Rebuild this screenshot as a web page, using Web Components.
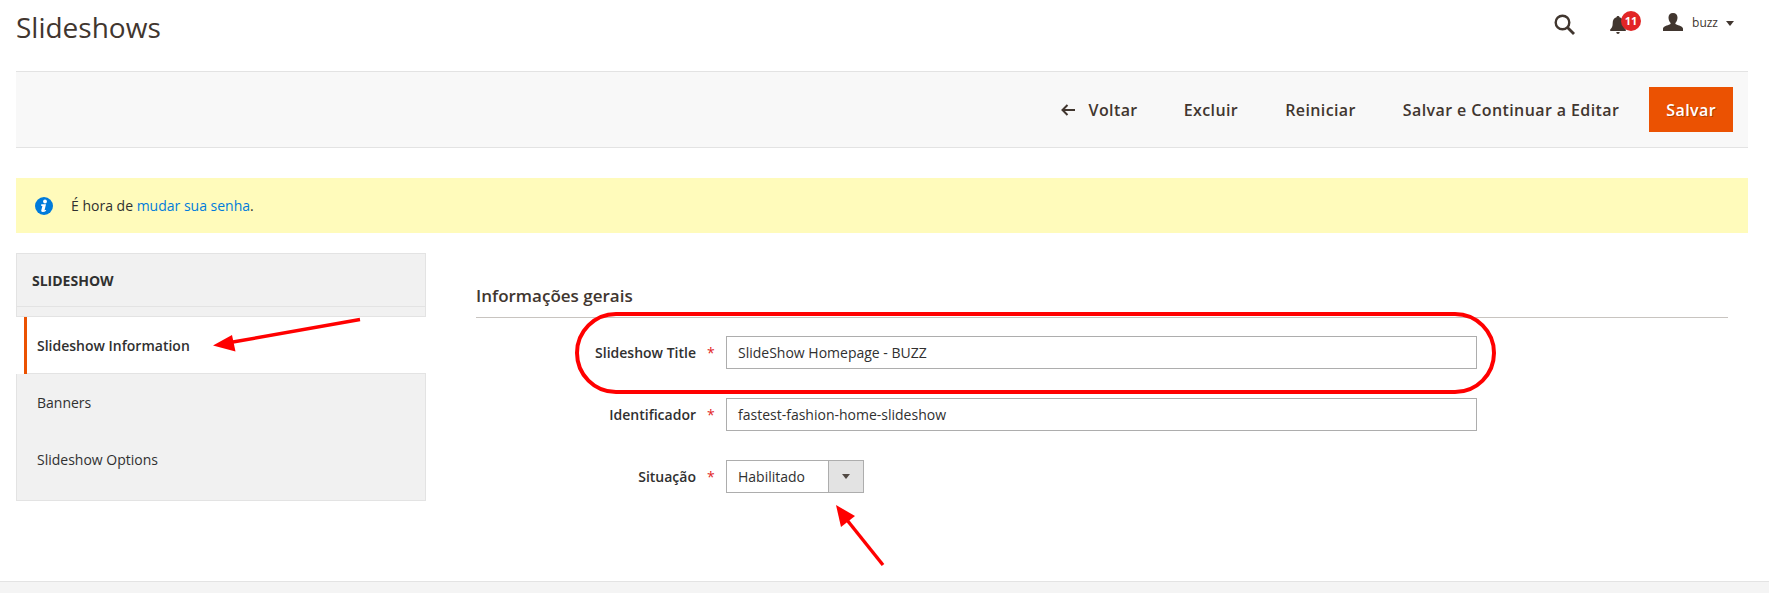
<!DOCTYPE html>
<html lang="pt-BR">
<head>
<meta charset="utf-8">
<title>Slideshows</title>
<style>
  html, body { margin: 0; padding: 0; background: #fff; }
  body { font-family: "Open Sans", "Liberation Sans", sans-serif; font-size: 14px; color: #303030; }
  .page { position: relative; height: 593px; overflow: hidden; display: flex; flex-direction: column; }
  .annotations { position: absolute; left: 0; top: 0; pointer-events: none; }
</style>
</head>
<body>
<div class="page">
  <admin-header title-text="Slideshows" user="buzz" count="11"></admin-header>
  <action-bar>
    <action-btn back>Voltar</action-btn>
    <action-btn>Excluir</action-btn>
    <action-btn>Reiniciar</action-btn>
    <action-btn>Salvar e Continuar a Editar</action-btn>
    <action-btn primary>Salvar</action-btn>
  </action-bar>
  <info-notice>É hora de <a href="#" style="color:#007bdb;text-decoration:none">mudar sua senha</a>.</info-notice>
  <edit-layout>
    <side-tabs slot="side" heading="SLIDESHOW">
      <tab-item active>Slideshow Information</tab-item>
      <tab-item>Banners</tab-item>
      <tab-item>Slideshow Options</tab-item>
    </side-tabs>
    <form-section heading="Informações gerais">
      <form-field label="Slideshow Title" value="SlideShow Homepage - BUZZ"></form-field>
      <form-field label="Identificador" value="fastest-fashion-home-slideshow"></form-field>
      <form-field label="Situação" value="Habilitado" select></form-field>
    </form-section>
  </edit-layout>
  <page-footer></page-footer>

  <!-- red marks drawn over the screenshot -->
  <svg class="annotations" width="1769" height="593" viewBox="0 0 1769 593" fill="none">
    <rect x="577" y="314" width="917" height="78" rx="39" ry="39" stroke="#ff0000" stroke-width="4"/>
    <path d="M360 319.5L230 342.5" stroke="#ff0000" stroke-width="3.4"/>
    <path d="M213 345.5L232 335L235.500 351.500Z" fill="#ff0000"/>
    <path d="M883 565L847 520" stroke="#ff0000" stroke-width="3.4"/>
    <path d="M836 505L855 516L841 527Z" fill="#ff0000"/>
  </svg>
</div>

<script>
class AdminHeader extends HTMLElement {
  connectedCallback() {
    const root = this.attachShadow({mode: 'open'});
    root.innerHTML = `
      <style>
        :host { display: flex; align-items: flex-start; justify-content: space-between; height: 71px; padding: 0 35px 0 16px; color: #41362f; }
        h1 { margin: 8px 0 0; font-size: 28px; line-height: 38px; font-weight: 400; color: #41362f; }
        .tools { display: flex; align-items: flex-start; }
        svg { display: block; }
        .search { margin-top: 14px; }
        .bell { position: relative; margin: 16px 0 0 35px; width: 18px; height: 20px; }
        .badge { position: absolute; left: 11px; top: -5px; width: 20px; height: 20px; border-radius: 50%; background: #e22626; color: #fff; font-size: 11px; font-weight: 700; line-height: 20px; text-align: center; }
        .user { margin: 13px 0 0 35px; }
        .name { margin: 13px 0 0 9px; font-size: 12px; line-height: 20px; }
        .caret { margin: 21px 0 0 8px; width: 0; height: 0; border: 4px solid transparent; border-top: 5px solid #41362f; border-bottom: 0; }
      </style>
      <h1>${this.getAttribute('title-text')}</h1>
      <div class="tools">
        <svg class="search" width="21" height="21" viewBox="0 0 21 21" fill="none" stroke="#41362f">
          <circle cx="8.500" cy="8.500" r="6.800" stroke-width="2.400"/>
          <path d="M13.500 13.500L20 20" stroke-width="2.800"/>
        </svg>
        <div class="bell">
          <svg width="16" height="18" viewBox="0 0 16 18" fill="#41362f">
            <path d="M8 0c1 0 1.500.6 1.500 1.300C12 2 13.300 4.200 13.300 7c0 3.600.8 5 2.500 6.500V15H.2v-1.500C1.900 12 2.700 10.600 2.700 7c0-2.800 1.300-5 3.800-5.700C6.500.6 7 0 8 0z"/>
            <path d="M6.300 16h3.400c0 1-.8 2-1.700 2s-1.700-1-1.700-2z"/>
          </svg>
          <div class="badge">${this.getAttribute('count')}</div>
        </div>
        <svg class="user" width="20" height="18" viewBox="0 0 20 18" fill="#41362f">
          <path d="M10 0c2.900 0 4.500 1.900 4.500 4.600 0 2-.8 4-1.900 5.200-.4.500-.3 1.200.3 1.500 2.900 1.300 6.600 2 7.100 4.100V18H0v-2.600c.5-2.100 4.200-2.800 7.100-4.100.6-.3.700-1 .3-1.500C6.300 8.600 5.500 6.600 5.500 4.600 5.500 1.900 7.100 0 10 0z"/>
        </svg>
        <div class="name">${this.getAttribute('user')}</div>
        <div class="caret"></div>
      </div>`;
  }
}

class ActionBar extends HTMLElement {
  constructor() {
    super();
    this.attachShadow({mode: 'open'}).innerHTML = `
      <style>
        :host { display: flex; align-items: center; justify-content: flex-end; gap: 13px; box-sizing: border-box; height: 77px; margin: 0 21px 0 16px; padding: 0 15px 0 0; background: #f8f8f8; border-top: 1px solid #e3e3e3; border-bottom: 1px solid #e3e3e3; }
      </style>
      <slot></slot>`;
  }
}

class ActionBtn extends HTMLElement {
  connectedCallback() {
    const back = this.hasAttribute('back');
    this.attachShadow({mode: 'open'}).innerHTML = `
      <style>
        :host { display: flex; align-items: center; height: 45px; padding: 0 17px; font-size: 16px; font-weight: 600; letter-spacing: .025em; color: #41362f; white-space: nowrap; }
        :host([back]) { margin-right: -1px; }
        :host([primary]) { background: #eb5202; color: #fff; text-shadow: 1px 1px 0 rgba(0,0,0,.25); }
        svg { margin-right: 14px; }
      </style>
      ${back ? `<svg width="14" height="12" viewBox="0 0 14 12" fill="none" stroke="#41362f" stroke-width="2"><path d="M14 6H2M6.500 1L1.500 6l5 5"/></svg>` : ''}
      <slot></slot>`;
  }
}

class InfoNotice extends HTMLElement {
  constructor() {
    super();
    this.attachShadow({mode: 'open'}).innerHTML = `
      <style>
        :host { display: flex; align-items: center; height: 55px; margin: 30px 21px 0 16px; padding-left: 19px; background: #fffbbb; font-size: 14px; color: #303030; }
        svg { margin-right: 18px; flex: none; }
      </style>
      <svg width="18" height="18" viewBox="0 0 18 18">
        <circle cx="9" cy="9" r="9" fill="#007bdb"/>
        <circle cx="10" cy="4.500" r="1.900" fill="#fff"/>
        <path d="M6.300 7.200h4.700l-1.400 5.700c-.1.300.1.500.4.400l.9-.4.300.8c-1.100.9-2.300 1.300-3.400 1.300-1.200 0-1.800-.6-1.500-1.700l1-3.800c.1-.4 0-.6-1.200-.8z" fill="#fff"/>
      </svg>
      <div><slot></slot></div>`;
  }
}

class EditLayout extends HTMLElement {
  constructor() {
    super();
    this.attachShadow({mode: 'open'}).innerHTML = `
      <style>
        :host { display: grid; grid-template-columns: 410px 1252px; column-gap: 50px; margin: 20px 0 0 16px; height: 328px; align-items: start; }
      </style>
      <slot name="side"></slot>
      <slot></slot>`;
  }
}

class SideTabs extends HTMLElement {
  connectedCallback() {
    this.attachShadow({mode: 'open'}).innerHTML = `
      <style>
        :host { display: block; box-sizing: border-box; height: 248px; border: 1px solid #e3e3e3; background: #f1f1f1; }
        .head { box-sizing: border-box; height: 53px; padding-left: 15px; line-height: 53px; font-size: 14px; font-weight: 700; color: #303030; border-bottom: 1px solid #e3e3e3; }
        .band { height: 9px; }
        .tabs { border-top: 1px solid #e3e3e3; }
      </style>
      <div class="head">${this.getAttribute('heading')}</div>
      <div class="band"></div>
      <div class="tabs"><slot></slot></div>`;
  }
}

class TabItem extends HTMLElement {
  constructor() {
    super();
    this.attachShadow({mode: 'open'}).innerHTML = `
      <style>
        :host { display: block; box-sizing: border-box; height: 57px; padding-left: 20px; line-height: 57px; font-size: 14px; color: #303030; }
        :host([active]) { margin: 0 -1px 0 -1px; padding-left: 13px; background-color: #fff; border-left: 8px solid #fff; font-weight: 600; box-shadow: inset 3px 0 0 #eb5202, inset 0 -1px 0 #e3e3e3; }
      </style>
      <slot></slot>`;
  }
}

class FormSection extends HTMLElement {
  connectedCallback() {
    this.attachShadow({mode: 'open'}).innerHTML = `
      <style>
        :host { display: block; padding-top: 32px; }
        h2 { margin: 0 0 18px; padding: 0 0 10px; font-size: 17px; line-height: 22px; font-weight: 600; color: #41362f; border-bottom: 1px solid #c8c4c0; }
        .rows { display: flex; flex-direction: column; gap: 29px; }
      </style>
      <h2>${this.getAttribute('heading')}</h2>
      <div class="rows"><slot></slot></div>`;
  }
}

class FormField extends HTMLElement {
  connectedCallback() {
    const select = this.hasAttribute('select');
    this.attachShadow({mode: 'open'}).innerHTML = `
      <style>
        :host { display: grid; grid-template-columns: 220px 30px auto; align-items: center; height: 33px; font-size: 14px; color: #303030; }
        .label { text-align: right; font-weight: 600; }
        .star { padding-left: 11px; color: #e22626; line-height: 33px; }
        .input { box-sizing: border-box; display: flex; align-items: center; width: 751px; height: 33px; padding-left: 11px; background: #fff; border: 1px solid #adadad; color: #303030; }
        .input.select { width: 138px; padding-left: 11px; position: relative; }
        .arrow { position: absolute; right: 0; top: 0; bottom: 0; width: 34px; background: #e3e3e3; border-left: 1px solid #adadad; display: flex; align-items: center; justify-content: center; }
        .arrow i { display: block; width: 0; height: 0; border: 4px solid transparent; border-top: 5px solid #514943; border-bottom: 0; }
      </style>
      <div class="label">${this.getAttribute('label')}</div>
      <div class="star">*</div>
      <div class="input ${select ? 'select' : ''}">${this.getAttribute('value')}${select ? '<span class="arrow"><i></i></span>' : ''}</div>`;
  }
}

class PageFooter extends HTMLElement {
  constructor() {
    super();
    this.attachShadow({mode: 'open'}).innerHTML = `
      <style>
        :host { display: block; flex: 1; background: #f4f4f4; border-top: 1px solid #e3e3e3; }
      </style>`;
  }
}

customElements.define('admin-header', AdminHeader);
customElements.define('action-bar', ActionBar);
customElements.define('action-btn', ActionBtn);
customElements.define('info-notice', InfoNotice);
customElements.define('edit-layout', EditLayout);
customElements.define('side-tabs', SideTabs);
customElements.define('tab-item', TabItem);
customElements.define('form-section', FormSection);
customElements.define('form-field', FormField);
customElements.define('page-footer', PageFooter);
</script>
</body>
</html>
